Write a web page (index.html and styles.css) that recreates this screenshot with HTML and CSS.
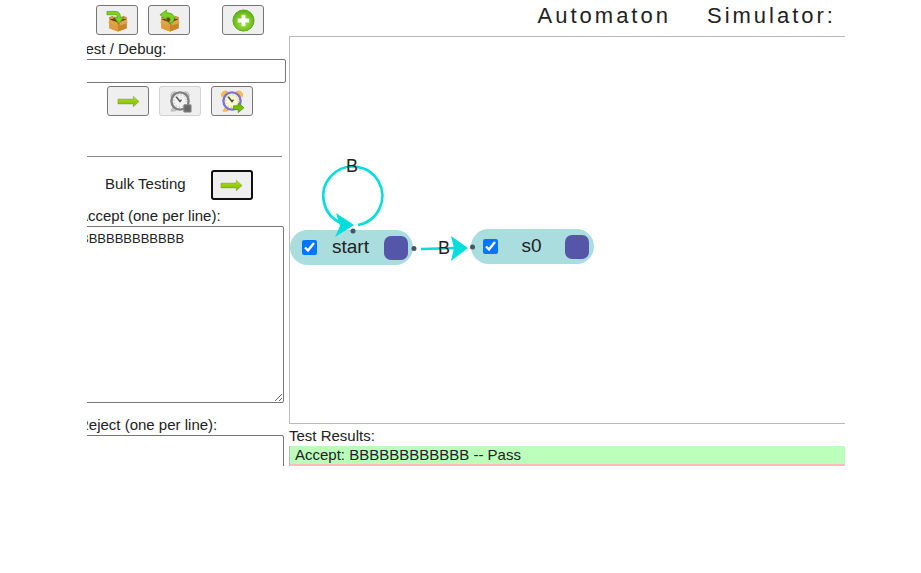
FILE: index.html
```html
<!DOCTYPE html>
<html lang="en">
<head>
<meta charset="utf-8">
<title>Automaton Simulator</title>
<link rel="stylesheet" href="styles.css">
</head>
<body>
<svg class="defs" aria-hidden="true">
  <defs>
    <linearGradient id="green" x1="0" y1="0" x2="0" y2="1"><stop offset="0" stop-color="#b4e01c"/><stop offset="1" stop-color="#7cb800"/></linearGradient>
    <radialGradient id="disc" cx=".5" cy=".6" r=".6"><stop offset="0" stop-color="#a8e03a"/><stop offset="1" stop-color="#5cb412"/></radialGradient>
    <symbol id="box" viewBox="0 0 24 24">
      <path d="M3.500 11l9-2 9 2v9l-9 3.500-9-3.500z" fill="#c98324"/>
      <path d="M3.500 12l9 2v9.500l-9-3.500z" fill="#e09c3c"/>
      <path d="M12.500 14l9-2v8l-9 3.500z" fill="#c8842a"/>
      <path d="M3.500 11l9-3 9 3-9 4z" fill="#6e4010"/>
      <path d="M3.500 11l-1 3.500 7.500 2.500 2.500-3zM21.500 11l1 3.500-7.500 2.500-2.500-3z" fill="#e0a44b"/>
      <path d="M3.500 11l-.5-2.500 4-1.500 2 2zM21.500 11l.5-2.500-4-1.500-2 2z" fill="#d0903a"/>
    </symbol>
    <symbol id="arrow" viewBox="0 0 24 24">
      <path d="M1 9.500h16V6.500l6 5.500-6 5.500v-3H1z" fill="url(#green)" stroke="#6c9c16" stroke-opacity=".6" stroke-width=".8" stroke-linejoin="round"/>
    </symbol>
  </defs>
</svg>
<div class="app">
  <aside class="sidebar">
    <div class="panel">
      <div class="tools files">
        <button class="tool" type="button" aria-label="Load">
          <svg viewBox="0 0 24 24"><use href="#box"/><path d="M1 2.500h8.500c4 0 5.500 2 5.500 6h3.500l-5 7-5-7H12c0-2-.5-2.500-2.500-2.500H1z" fill="#7bd321" stroke="#4b9b10" stroke-width=".7"/></svg>
        </button>
        <button class="tool" type="button" aria-label="Save">
          <svg viewBox="0 0 24 24"><use href="#box"/><path d="M11 14.500c3-4 2-6-2-6v3L2 6l7-5v3c8 0 10 5 6 10.500z" fill="#7bd321" stroke="#4b9b10" stroke-width=".7"/></svg>
        </button>
        <button class="tool add" type="button" aria-label="Add state">
          <svg viewBox="0 0 24 24"><circle cx="12" cy="12" r="11" fill="url(#disc)" stroke="#57a316"/><path d="M10 6h4v4h4v4h-4v4h-4v-4H6v-4h4z" fill="#fff"/></svg>
        </button>
      </div>
      <label class="caption" for="debug">Test / Debug:</label>
      <input class="debug" id="debug" type="text">
      <div class="tools debugging">
        <button class="tool" type="button" aria-label="Run test"><svg viewBox="0 0 24 24"><use href="#arrow"/></svg></button>
        <button class="tool" type="button" aria-label="Stop debugging" disabled>
          <svg viewBox="0 0 24 24"><path d="M2 7a4 4 0 0 1 5-5zM16 2a4 4 0 0 1 5 5zM4 18l-2 4h4l3-2z" fill="#c8c8c8" stroke="#bbb"/><circle cx="11.500" cy="11.500" r="9" fill="#f2f2f2" stroke="#808080" stroke-width="2.500"/><circle cx="11.500" cy="11.500" r="6.500" fill="none" stroke="#999" stroke-width="1" stroke-dasharray="1 2.400"/><path d="M7.500 7l4 5 1.500-2" fill="none" stroke="#555" stroke-width="1.500"/><path d="M15.500 15.500h7.500v7.500h-7.500z" fill="#686868" stroke="#888"/></svg>
        </button>
        <button class="tool" type="button" aria-label="Start debugging">
          <svg viewBox="0 0 24 24"><path d="M1 7a4 4 0 0 1 6-5zM16 2a4 4 0 0 1 6 5zM5 18l-3 4h4l3-2z" fill="#ffc44d" stroke="#f1ac37"/><circle cx="11.500" cy="11.500" r="9" fill="#fff6d0" stroke="#7c72d8" stroke-width="2.500"/><circle cx="11.500" cy="11.500" r="6.500" fill="none" stroke="#baa96c" stroke-width="1" stroke-dasharray="1 2.400"/><path d="M7.500 7l4 5 1.500-2" fill="none" stroke="#444" stroke-width="1.500"/><path d="M13 16.500h5v-3l6 5-6 5v-3h-5z" fill="#78bd0c" stroke="#4d9209" stroke-width=".8"/></svg>
        </button>
      </div>
      <hr class="rule">
      <div class="bulk">
        <span>Bulk Testing</span>
        <button class="tool focused" type="button" aria-label="Run bulk tests"><svg viewBox="0 0 24 24"><use href="#arrow"/></svg></button>
      </div>
      <label class="caption" for="accept">Accept (one per line):</label>
      <textarea class="lines" id="accept" spellcheck="false">BBBBBBBBBBBB</textarea>
      <label class="caption reject" for="reject">Reject (one per line):</label>
      <textarea class="lines" id="reject" spellcheck="false"></textarea>
    </div>
  </aside>
  <main class="main">
    <h1 class="title"><span>Automaton</span> <span>Simulator:</span></h1>
    <div class="canvas">
      <div class="node start">
        <input type="checkbox" id="acc-start" checked>
        <label for="acc-start">start</label>
        <button class="handle" type="button" aria-label="Connect from start"></button>
      </div>
      <div class="node s0">
        <input type="checkbox" id="acc-s0" checked>
        <label for="acc-s0">s0</label>
        <button class="handle" type="button" aria-label="Connect from s0"></button>
      </div>
      <svg class="edges">
        <g fill="none" stroke="#00dddd" stroke-width="2.500">
          <path d="M68 188A29.500 29.500 0 1 0 51 186"/>
          <path d="M131 212L166 211"/>
        </g>
        <path d="M46 176L64 188L45 200L50 189zM161 199L178 211L161 224L164 211z" fill="#00dddd"/>
        <g fill="#445566"><circle cx="63" cy="194" r="2.500"/><circle cx="124" cy="211.500" r="2.500"/><circle cx="182.500" cy="210" r="2.500"/></g>
        <g class="edge-label"><text x="62" y="135">B</text><text x="154" y="217">B</text></g>
      </svg>
    </div>
    <h2 class="results-title">Test Results:</h2>
    <div class="results">
      <div class="result">Accept: BBBBBBBBBBBB -- Pass</div>
    </div>
  </main>
</div>
</body>
</html>
```
FILE: styles.css
```css
* { box-sizing: border-box; }

body {
  margin: 0;
  background: #fff;
  color: #222;
  font: 15px/20px "Liberation Sans", Arial, sans-serif;
}

.defs { position: absolute; width: 0; height: 0; }

.app {
  display: flex;
  height: 466px;
  margin: 0 76px 0 87px;
  overflow: hidden;
}

.sidebar { flex: 0 0 202px; }

.panel {
  display: flex;
  flex-direction: column;
  margin-left: -10px;
}

.tools { display: flex; gap: 10px; }
.files { padding: 5px 0 0 19px; }
.add { margin-left: 22px; }
.debugging { padding: 3px 0 0 30px; }

.tool {
  display: flex;
  align-items: center;
  justify-content: center;
  width: 42px;
  height: 30px;
  padding: 0;
  border: 1px solid #767676;
  border-radius: 3px;
  background: #efefef;
}
.tool svg { width: 23px; height: 23px; }
.tool:disabled { border-color: #d0d0d0; }
.focused { border: 2px solid #101010; }

.caption { padding-left: 1px; line-height: 20px; }
.files + .caption { margin: 4px 0 0; }

.debug {
  height: 24px;
  border: 1px solid #767676;
  border-radius: 2px;
  margin-right: 3px;
}

.rule {
  width: auto;
  height: 1px;
  margin: 40px 7px 13px 0;
  border: 0;
  background: #888;
}

.bulk {
  display: flex;
  align-items: center;
  gap: 25px;
  padding-left: 28px;
  margin-bottom: 6px;
}
.bulk span { line-height: 20px; padding-bottom: 2px; }

.lines {
  display: block;
  height: 177px;
  margin-right: 5px;
  padding: 3px 2px;
  border: 1px solid #767676;
  border-radius: 2px;
  color: #222;
  font: 13px/18px "Liberation Sans", Arial, sans-serif;
}
.reject { margin-top: 12px; }

.main {
  display: flex;
  flex: 1;
  flex-direction: column;
  min-width: 0;
}

.title {
  display: flex;
  justify-content: flex-end;
  gap: 36px;
  height: 36px;
  margin: 0;
  padding-right: 9px;
  font-size: 22px;
  font-weight: 400;
  line-height: 32px;
  letter-spacing: 3px;
}

.canvas {
  position: relative;
  height: 388px;
  border: 1px solid #bbb;
  border-right: 0;
}

.node {
  position: absolute;
  display: flex;
  align-items: center;
  width: 123px;
  height: 35px;
  padding: 0 5px 0 12px;
  border-radius: 18px;
  background: #aadddd;
  font-size: 19px;
}
.node input { width: 15px; height: 15px; margin: 0; }
.node label { flex: 1; padding-bottom: 2px; text-align: center; }
.start { left: 0; top: 193px; }
.s0 { left: 181px; top: 192px; }

.handle {
  width: 24px;
  height: 24px;
  padding: 0;
  border: 0;
  border-radius: 7px;
  background: #5555aa;
}

.edges {
  position: absolute;
  inset: 0;
  width: 100%;
  height: 100%;
  pointer-events: none;
}
.edge-label { font-size: 18px; fill: #222; text-anchor: middle; }

.results-title {
  margin: 2px 0 0;
  font-size: 15px;
  font-weight: 400;
  line-height: 20px;
}

.results { border-left: 1px solid #bbb; }
.result {
  padding-left: 5px;
  border-bottom: 2px solid #ffbbbb;
  background: #bbffbb;
  line-height: 18px;
}
```
